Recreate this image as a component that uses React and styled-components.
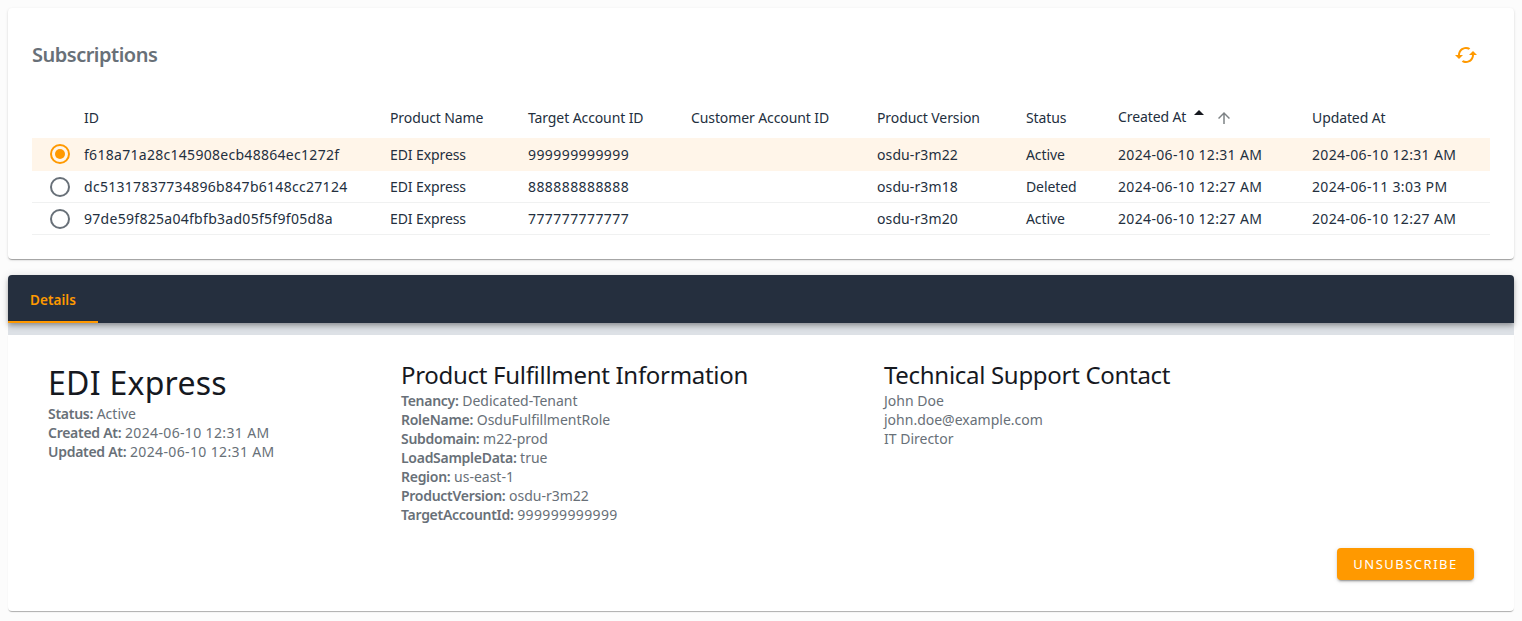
import React from 'react';
import styled, { createGlobalStyle } from 'styled-components';

const Global = createGlobalStyle`
  html, body { margin: 0; padding: 0; background: #fcfcfc; }
  body { font-family: "Noto Sans", "Open Sans", sans-serif; color: #16191f; }
`;
const Page = styled.div`
  padding: 8px;
  display: flex;
  flex-direction: column;
  gap: 16px;
`;
const Card = styled.section`
  background: #fff;
  border-radius: 4px;
  height: 251px;
  box-sizing: border-box;
  padding: 24px 24px 0;
  box-shadow: 0 2px 1px -1px rgba(0,0,0,.2), 0 1px 1px 0 rgba(0,0,0,.14), 0 1px 3px 0 rgba(0,0,0,.12);
`;
const CardHead = styled.header`
  display: flex;
  justify-content: space-between;
  align-items: center;
  height: 46px;
  padding-right: 12px;
  margin-bottom: 22px;
`;
const Title = styled.h2`
  margin: 0;
  font-size: 20px;
  line-height: 46px;
  font-weight: 600;
  letter-spacing: -0.5px;
  color: #687078;
`;
const IconBtn = styled.button`
  border: 0;
  background: none;
  padding: 0;
  display: flex;
  color: #ff9900;
`;
const Table = styled.table`
  width: 1458px;
  table-layout: fixed;
  border-collapse: collapse;
  font-size: 14px;
  letter-spacing: -0.1px;
`;
const HeadCell = styled.th`
  height: 38px;
  box-sizing: border-box;
  padding: 0 8px 4px;
  text-align: left;
  font-weight: 400;
  white-space: nowrap;
  color: #232f3e;
  vertical-align: middle;
`;
const Row = styled.tr`
  background: ${p => (p.$selected ? '#fff5e9' : 'transparent')};
  border-bottom: 1px solid ${p => (p.$selected ? 'transparent' : '#f0f1f1')};
  td { height: ${p => (p.$selected ? '32px' : '31px')}; }
`;
const Cell = styled.td`
  padding: 0 8px;
  white-space: nowrap;
  color: #232f3e;
  letter-spacing: ${p => p.$spacing ?? -0.1}px;
`;
const RadioCell = styled.td`
  padding: 0 0 0 18px;
`;
const Radio = styled.span`
  display: block;
  box-sizing: border-box;
  width: 20px;
  height: 20px;
  border-radius: 50%;
  border: 2px solid ${p => (p.$on ? '#ff9900' : '#687078')};
  position: relative;
  &::after {
    content: '';
    display: ${p => (p.$on ? 'block' : 'none')};
    position: absolute;
    inset: 3px;
    border-radius: 50%;
    background: #ff9900;
  }
`;
const SortCaret = styled.span`
  display: inline-block;
  width: 0;
  height: 0;
  border-left: 5px solid transparent;
  border-right: 5px solid transparent;
  border-bottom: 5px solid #16191f;
  margin-left: 8px;
  vertical-align: 7px;
`;
const SortArrow = styled.svg`
  width: 18px;
  height: 18px;
  margin-left: 11px;
  vertical-align: -4.5px;
  fill: #7d8285;
`;
const DetailPanel = styled.section`
  height: 336px;
  display: flex;
  flex-direction: column;
  border-radius: 4px 4px 0 0;
`;
const TabBar = styled.nav`
  height: 48px;
  flex: none;
  background: #252f3e;
  border-radius: 4px 4px 0 0;
  display: flex;
  position: relative;
  z-index: 1;
  box-shadow: 0 2px 4px -1px rgba(0,0,0,.2), 0 4px 5px 0 rgba(0,0,0,.14), 0 1px 10px 0 rgba(0,0,0,.12);
`;
const Tab = styled.div`
  width: 90px;
  box-sizing: border-box;
  padding-top: 3px;
  border-bottom: 2px solid #ff9900;
  color: #ff9900;
  font-size: 13.5px;
  font-weight: 600;
  letter-spacing: 0.05px;
  display: flex;
  align-items: center;
  justify-content: center;
`;
const Strip = styled.div`
  height: 12px;
  flex: none;
  background: #dde1e6;
`;
const Body = styled.div`
  flex: 1;
  background: #fff;
  padding: 26px 40px 31px;
  display: flex;
  flex-direction: column;
  justify-content: space-between;
  box-sizing: border-box;
  border-radius: 0 0 4px 4px;
  box-shadow: 0 2px 1px -1px rgba(0,0,0,.2), 0 1px 1px 0 rgba(0,0,0,.14);
`;
const Columns = styled.div`
  display: grid;
  grid-template-columns: 353px 483px 1fr;
`;
const H1 = styled.h3`
  margin: 0 0 -1px;
  font-size: 32px;
  line-height: 44px;
  letter-spacing: 0.27px;
  font-weight: 400;
  color: #16191f;
`;
const H2 = styled.h4`
  margin: 0 0 2px;
  font-size: 24px;
  line-height: 28px;
  letter-spacing: -0.3px;
  font-weight: 400;
  color: #16191f;
`;
const Line = styled.div`
  font-size: 14px;
  line-height: 19px;
  color: #687078;
  b { font-weight: 600; letter-spacing: -0.28px; }
`;
const Num = styled.span`
  letter-spacing: 0.36px;
`;
const Actions = styled.div`
  display: flex;
  justify-content: flex-end;
`;
const Unsub = styled.button`
  width: 137px;
  height: 32px;
  border: 0;
  border-radius: 4px;
  background: #ff9900;
  color: #fff;
  font-family: inherit;
  font-size: 13px;
  letter-spacing: 1.5px;
  font-weight: 400;
  box-shadow: 0 3px 1px -2px rgba(0,0,0,.2), 0 2px 2px 0 rgba(0,0,0,.14), 0 1px 5px 0 rgba(0,0,0,.12);
`;

const columns = [44, 306, 138, 163, 186, 149, 92, 194, 186];
const rows = [
  ['f618a71a28c145908ecb48864ec1272f', '999999999999', 'osdu-r3m22', 'Active', '2024-06-10 12:31 AM', '2024-06-10 12:31 AM'],
  ['dc51317837734896b847b6148cc27124', '888888888888', 'osdu-r3m18', 'Deleted', '2024-06-10 12:27 AM', '2024-06-11 3:03 PM'],
  ['97de59f825a04fbfb3ad05f5f9f05d8a', '777777777777', 'osdu-r3m20', 'Active', '2024-06-10 12:27 AM', '2024-06-10 12:27 AM'],
];

const Info = ({ label, children }) => (
  <Line><b>{label}:</b> {children}</Line>
);

export default function App() {
  return (
    <>
      <Global />
      <Page>
        <Card>
          <CardHead>
            <Title>Subscriptions</Title>
            <IconBtn aria-label="Refresh">
              <svg width="24" height="24" viewBox="0 0 24 24" fill="currentColor">
                <path d="M19 8l-4 4h3c0 3.31-2.69 6-6 6-1.01 0-1.97-.25-2.8-.7l-1.46 1.46C8.97 19.54 10.43 20 12 20c4.42 0 8-3.58 8-8h3l-4-4zM6 12c0-3.31 2.69-6 6-6 1.01 0 1.97.25 2.8.7l1.46-1.46C15.03 4.46 13.57 4 12 4c-4.42 0-8 3.58-8 8H1l4 4 4-4H6z" />
              </svg>
            </IconBtn>
          </CardHead>
          <Table>
            <colgroup>
              {columns.map((w, i) => <col key={i} style={{ width: w }} />)}
            </colgroup>
            <thead>
              <tr>
                <HeadCell />
                <HeadCell>ID</HeadCell>
                <HeadCell>Product Name</HeadCell>
                <HeadCell>Target Account ID</HeadCell>
                <HeadCell>Customer Account ID</HeadCell>
                <HeadCell>Product Version</HeadCell>
                <HeadCell>Status</HeadCell>
                <HeadCell>
                  Created At<SortCaret />
                  <SortArrow viewBox="0 0 24 24"><path d="M4 12l1.41 1.41L11 7.83V20h2V7.83l5.58 5.59L20 12l-8-8-8 8z" /></SortArrow>
                </HeadCell>
                <HeadCell>Updated At</HeadCell>
              </tr>
            </thead>
            <tbody>
              {rows.map((r, i) => (
                <Row key={r[0]} $selected={i === 0}>
                  <RadioCell><Radio $on={i === 0} /></RadioCell>
                  <Cell $spacing={0.29}>{r[0]}</Cell>
                  <Cell>EDI Express</Cell>
                  <Cell $spacing={0.42}>{r[1]}</Cell>
                  <Cell />
                  <Cell $spacing={0.1}>{r[2]}</Cell>
                  <Cell>{r[3]}</Cell>
                  <Cell $spacing={0.34}>{r[4]}</Cell>
                  <Cell $spacing={0.34}>{r[5]}</Cell>
                </Row>
              ))}
            </tbody>
          </Table>
        </Card>
        <DetailPanel>
          <TabBar><Tab>Details</Tab></TabBar>
          <Strip />
          <Body>
            <Columns>
              <div>
                <H1>EDI Express</H1>
                <Info label="Status">Active</Info>
                <Info label="Created At"><Num>2024-06-10 12:31 AM</Num></Info>
                <Info label="Updated At"><Num>2024-06-10 12:31 AM</Num></Info>
              </div>
              <div>
                <H2>Product Fulfillment Information</H2>
                <Info label="Tenancy">Dedicated-Tenant</Info>
                <Info label="RoleName">OsduFulfillmentRole</Info>
                <Info label="Subdomain">m22-prod</Info>
                <Info label="LoadSampleData">true</Info>
                <Info label="Region">us-east-1</Info>
                <Info label="ProductVersion">osdu-r3m22</Info>
                <Info label="TargetAccountId"><Num>999999999999</Num></Info>
              </div>
              <div>
                <H2>Technical Support Contact</H2>
                <Line>John Doe</Line>
                <Line>john.doe@example.com</Line>
                <Line>IT Director</Line>
              </div>
            </Columns>
            <Actions><Unsub>UNSUBSCRIBE</Unsub></Actions>
          </Body>
        </DetailPanel>
      </Page>
    </>
  );
}
